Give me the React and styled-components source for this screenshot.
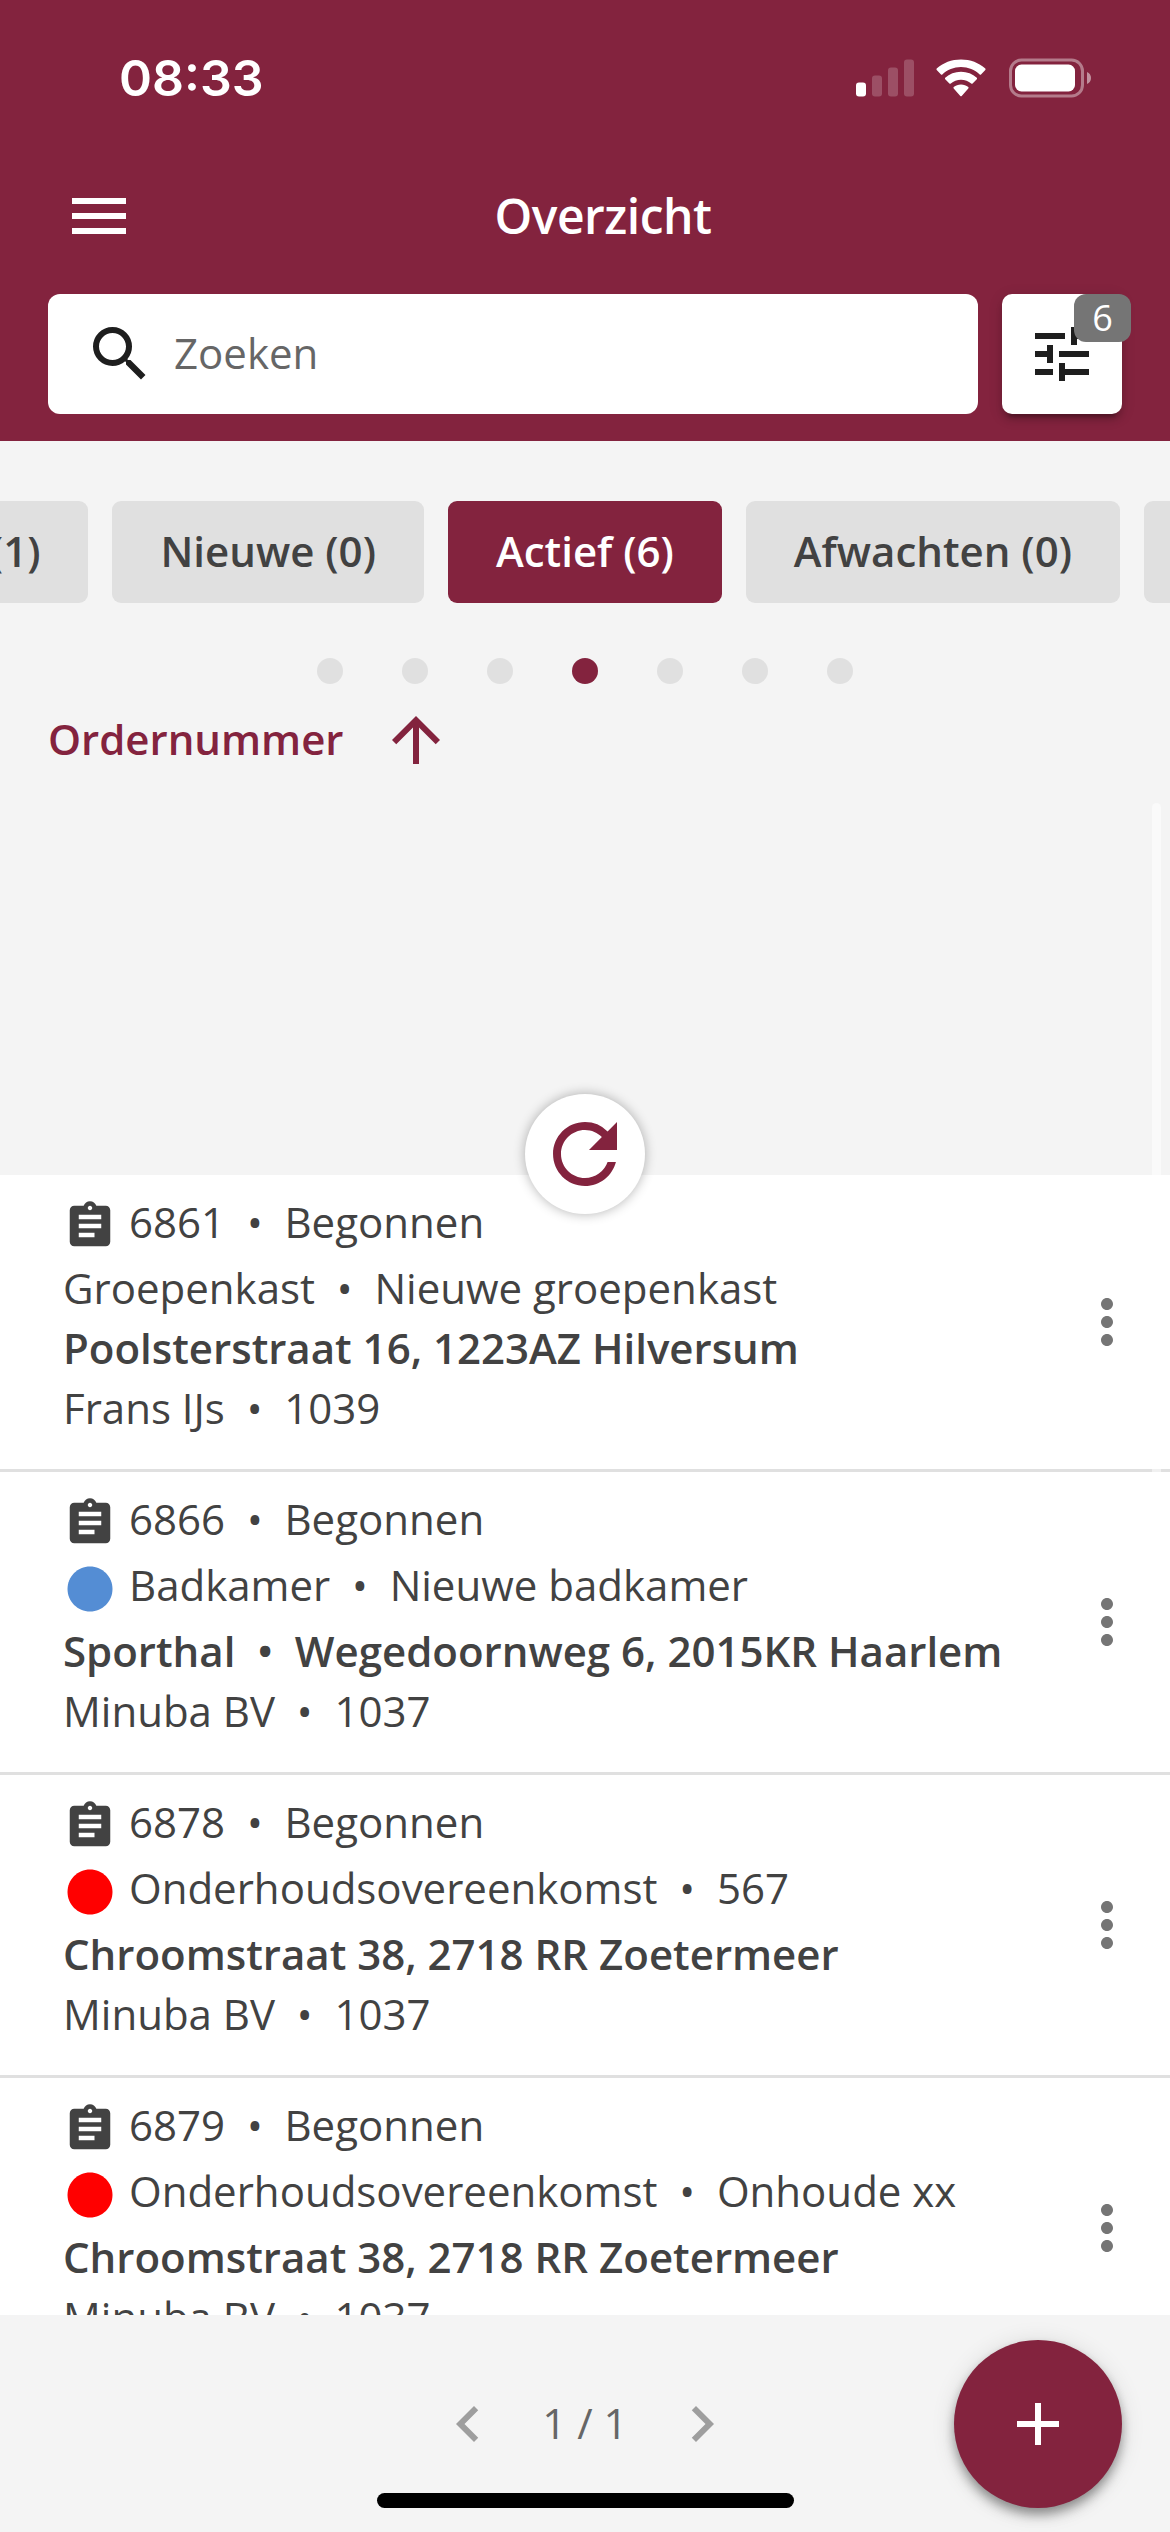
import React from "react";
import styled, { createGlobalStyle } from "styled-components";

import {
    MdAdd,
    MdArrowUpward,
    MdAssignment,
    MdChevronLeft,
    MdChevronRight,
    MdCircle,
    MdMenu,
    MdMoreVert,
    MdRefresh,
    MdSearch,
    MdTune,
} from "react-icons/md";

const GlobalStyle = createGlobalStyle`
    * {
        box-sizing: border-box;
    }

    body {
        margin: 0;
        background-color: #f4f4f4;
        font-family: "Open Sans", sans-serif;
        font-size: 42px;
        line-height: 58px;
        color: #424242;
    }

    svg {
        display: block;
        flex-shrink: 0;
    }

    button {
        display: flex;
        align-items: center;
        justify-content: center;
        padding: 0;
        border: none;
        background: none;
        font: inherit;
        color: inherit;
    }
`;

const Container = styled.main`
    width: 1170px;
    height: 2532px;
    display: flex;
    flex-direction: column;
    overflow: hidden;
`;

const Header = styled.header`
    height: 441px;
    flex-shrink: 0;
    color: #fff;
    background-color: #83233e;
`;

const StatusBar = styled.div`
    height: 156px;
    padding: 0 79px 0 119px;
    display: flex;
    align-items: center;
    justify-content: space-between;
`;

const Time = styled.span`
    font-family: "Inter", sans-serif;
    font-size: 50px;
    font-weight: 600;
`;

const Toolbar = styled.div`
    height: 120px;
    padding: 0 63px;
    display: grid;
    grid-template-columns: 72px 1fr 36px;
    align-items: center;
`;

const Title = styled.h1`
    margin: 0;
    font-size: 48px;
    font-weight: 600;
    letter-spacing: -0.5px;
    text-align: center;
`;

const SearchRow = styled.div`
    padding: 18px 48px 0;
    display: flex;
    gap: 24px;
`;

const SearchBox = styled.div`
    height: 120px;
    flex: 1;
    padding: 0 36px;
    display: flex;
    align-items: center;
    gap: 18px;
    border-radius: 12px;
    color: #1e1e1e;
    background-color: #fff;
`;

const Label = styled.span`
    padding-bottom: 2px;
`;

const Placeholder = styled(Label)`
    color: #666;
`;

const FilterButton = styled.button`
    && {
        width: 120px;
        height: 120px;
        position: relative;
        border-radius: 10px;
        color: #1e1e1e;
        background-color: #fff;
        box-shadow: 0 9px 3px -6px rgba(0, 0, 0, 0.2),
            0 6px 6px 0 rgba(0, 0, 0, 0.14), 0 3px 15px 0 rgba(0, 0, 0, 0.12);
    }
`;

const Badge = styled.span`
    width: 57px;
    height: 48px;
    position: absolute;
    top: 0;
    right: -9px;
    border-radius: 12px;
    font-size: 36px;
    line-height: 47px;
    text-align: center;
    color: #fff;
    background-color: #757575;
`;

// scrolled so that the active chip sits in the middle
const Chips = styled.nav`
    margin-right: -70px;
    padding-top: 60px;
    display: flex;
    justify-content: flex-end;
    gap: 24px;
    flex-shrink: 0;
`;

const Chip = styled.button`
    && {
        height: 102px;
        padding: 0 48px 2px;
        flex-shrink: 0;
        border-radius: 9px;
        font-weight: 600;
        white-space: nowrap;
        color: ${({ $active }) => ($active ? "#fff" : "#424242")};
        background-color: ${({ $active }) => ($active ? "#83233e" : "#e0e0e0")};
    }
`;

const Dots = styled.div`
    padding-top: 55px;
    display: flex;
    justify-content: center;
    gap: 59px;
`;

const Dot = styled.span`
    width: 26px;
    height: 26px;
    border-radius: 50%;
    background-color: ${({ $active }) => ($active ? "#83233e" : "#e0e0e0")};
`;

const SortRow = styled.div`
    height: 111px;
    padding: 1px 48px 0;
    display: flex;
    align-items: center;
    gap: 36px;
    flex-shrink: 0;
    font-weight: 600;
    color: #83233e;
`;

const ListArea = styled.section`
    flex: 1;
    min-height: 0;
    position: relative;
    padding-top: 380px;
    overflow: hidden;
`;

const Scrollbar = styled.span`
    width: 9px;
    height: 690px;
    position: absolute;
    top: 8px;
    right: 9px;
    border-radius: 5px;
    background-color: rgba(255, 255, 255, 0.5);
`;

const RefreshButton = styled.button`
    && {
        width: 120px;
        height: 120px;
        position: absolute;
        top: 299px;
        left: 525px;
        border-radius: 50%;
        color: #83233e;
        background-color: #fff;
        box-shadow: 0 0 12px rgba(0, 0, 0, 0.3);
    }
`;

const List = styled.ul`
    margin: 0;
    padding: 0;
    list-style: none;
`;

const Row = styled.li`
    padding: 18px 27px 30px 63px;
    display: flex;
    justify-content: space-between;
    border-bottom: 3px solid #e0e0e0;
    background-color: #fff;

    & > svg {
        align-self: center;
        margin: -18px 0 -30px;
        color: #757575;
    }
`;

const Line = styled.div`
    height: ${({ $tall }) => ($tall ? "66px" : "60px")};
    display: flex;
    gap: 12px;
    white-space: pre;
    font-weight: ${({ $strong }) => ($strong ? 600 : 400)};

    svg {
        margin-top: 6px;
    }
`;

const Footer = styled.footer`
    height: 217px;
    flex-shrink: 0;
    position: relative;
    display: flex;
    flex-direction: column;
    align-items: center;
    justify-content: space-between;
    padding: 73px 0 24px;
`;

const Pager = styled.div`
    width: 307px;
    height: 72px;
    display: flex;
    align-items: center;
    justify-content: space-between;
    color: #666;

    svg {
        color: #9e9e9e;
    }
`;

const HomeIndicator = styled.span`
    width: 417px;
    height: 15px;
    border-radius: 8px;
    background-color: #000;
`;

const AddButton = styled.button`
    && {
        width: 168px;
        height: 168px;
        position: absolute;
        top: 25px;
        right: 48px;
        border-radius: 50%;
        color: #fff;
        background-color: #83233e;
        box-shadow: 0 9px 15px -3px rgba(0, 0, 0, 0.2),
            0 6px 10px 0 rgba(0, 0, 0, 0.24), 0 3px 24px 0 rgba(0, 0, 0, 0.12);
    }
`;

const filters = [
    { id: "previous", label: "(1)" },
    { id: "new", label: "Nieuwe (0)" },
    { id: "active", label: "Actief (6)", active: true },
    { id: "waiting", label: "Afwachten (0)" },
    { id: "next", label: "" },
];

const orders = [
    {
        number: "6861",
        status: "Begonnen",
        subject: ["Groepenkast", "Nieuwe groepenkast"],
        address: ["Poolsterstraat 16, 1223AZ Hilversum"],
        customer: ["Frans IJs", "1039"],
    },
    {
        number: "6866",
        status: "Begonnen",
        color: "#548dd4",
        subject: ["Badkamer", "Nieuwe badkamer"],
        address: ["Sporthal", "Wegedoornweg 6, 2015KR Haarlem"],
        customer: ["Minuba BV", "1037"],
    },
    {
        number: "6878",
        status: "Begonnen",
        color: "#ff0000",
        subject: ["Onderhoudsovereenkomst", "567"],
        address: ["Chroomstraat 38, 2718 RR Zoetermeer"],
        customer: ["Minuba BV", "1037"],
    },
    {
        number: "6879",
        status: "Begonnen",
        color: "#ff0000",
        subject: ["Onderhoudsovereenkomst", "Onhoude xx"],
        address: ["Chroomstraat 38, 2718 RR Zoetermeer"],
        customer: ["Minuba BV", "1037"],
    },
];

const join = (parts) => parts.join("  •  ");

function StatusIcons() {
    return (
        <svg width="236" height="40" viewBox="0 0 236 40" fill="#fff">
            <rect x="1" y="24.5" width="10" height="14" rx="3" />
            <g opacity="0.2">
                <rect x="17" y="17.5" width="10" height="21" rx="3" />
                <rect x="33" y="9.5" width="10" height="29" rx="3" />
                <rect x="49" y="1.5" width="10" height="37" rx="3" />
            </g>
            <path d="M106 9c7.2 0 13.800 2.800 18.700 7.400.4.400 1 .4 1.300 0l4.300-4.400c.4-.4.4-1 0-1.400C123.900 4.800 115.400 1.500 106 1.500S88.100 4.800 81.700 10.600c-.4.4-.4 1 0 1.400l4.300 4.400c.4.400 1 .4 1.300 0C92.200 11.800 98.800 9 106 9z" />
            <path d="M106 21.700c4 0 7.500 1.400 10.200 3.800.4.400 1 .4 1.400 0l4.200-4.300c.4-.4.4-1 0-1.400-4.200-3.900-9.700-6.100-15.800-6.100s-11.600 2.200-15.800 6.100c-.4.4-.4 1 0 1.400l4.200 4.300c.4.400 1 .4 1.400 0 2.700-2.400 6.200-3.800 10.200-3.800z" />
            <path d="M113.300 29.100c.4.400.4 1 0 1.400l-6.600 7.400c-.4.400-1 .4-1.400 0l-6.600-7.400c-.4-.4-.4-1 0-1.400 2-1.700 4.500-2.600 7.300-2.600s5.300.9 7.300 2.600z" />
            <rect
                x="155.500"
                y="2"
                width="72"
                height="36"
                rx="11"
                fill="none"
                stroke="#fff"
                strokeWidth="3"
                opacity="0.4"
            />
            <rect x="160" y="6.500" width="60" height="27" rx="6.500" />
            <path d="M232 14c2.500 1 4 3.300 4 6s-1.500 5-4 6z" opacity="0.5" />
        </svg>
    );
}

function Order({ order }) {
    return (
        <Row>
            <div>
                <Line $tall>
                    <MdAssignment size={54} />
                    {join([order.number, order.status])}
                </Line>
                <Line $tall={Boolean(order.color)}>
                    {order.color && <MdCircle size={54} color={order.color} />}
                    {join(order.subject)}
                </Line>
                <Line $strong>{join(order.address)}</Line>
                <Line>{join(order.customer)}</Line>
            </div>
            <MdMoreVert size={72} />
        </Row>
    );
}

function App() {
    return (
        <Container>
            <GlobalStyle />
            <Header>
                <StatusBar>
                    <Time>08:33</Time>
                    <StatusIcons />
                </StatusBar>
                <Toolbar>
                    <MdMenu size={72} />
                    <Title>Overzicht</Title>
                </Toolbar>
                <SearchRow>
                    <SearchBox>
                        <MdSearch size={72} />
                        <Placeholder>Zoeken</Placeholder>
                    </SearchBox>
                    <FilterButton>
                        <MdTune size={72} />
                        <Badge>6</Badge>
                    </FilterButton>
                </SearchRow>
            </Header>
            <Chips>
                {filters.map(({ id, label, active }) => (
                    <Chip key={id} $active={active}>
                        {label}
                    </Chip>
                ))}
            </Chips>
            <Dots>
                {[0, 1, 2, 3, 4, 5, 6].map((page) => (
                    <Dot key={page} $active={page === 3} />
                ))}
            </Dots>
            <SortRow>
                <Label>Ordernummer</Label>
                <MdArrowUpward size={72} />
            </SortRow>
            <ListArea>
                <List>
                    {orders.map((order) => (
                        <Order key={order.number} order={order} />
                    ))}
                </List>
                <Scrollbar />
                <RefreshButton>
                    <MdRefresh size={96} />
                </RefreshButton>
            </ListArea>
            <Footer>
                <Pager>
                    <MdChevronLeft size={72} />
                    <Label>1 / 1</Label>
                    <MdChevronRight size={72} />
                </Pager>
                <HomeIndicator />
                <AddButton>
                    <MdAdd size={72} />
                </AddButton>
            </Footer>
        </Container>
    );
}

export default App;
